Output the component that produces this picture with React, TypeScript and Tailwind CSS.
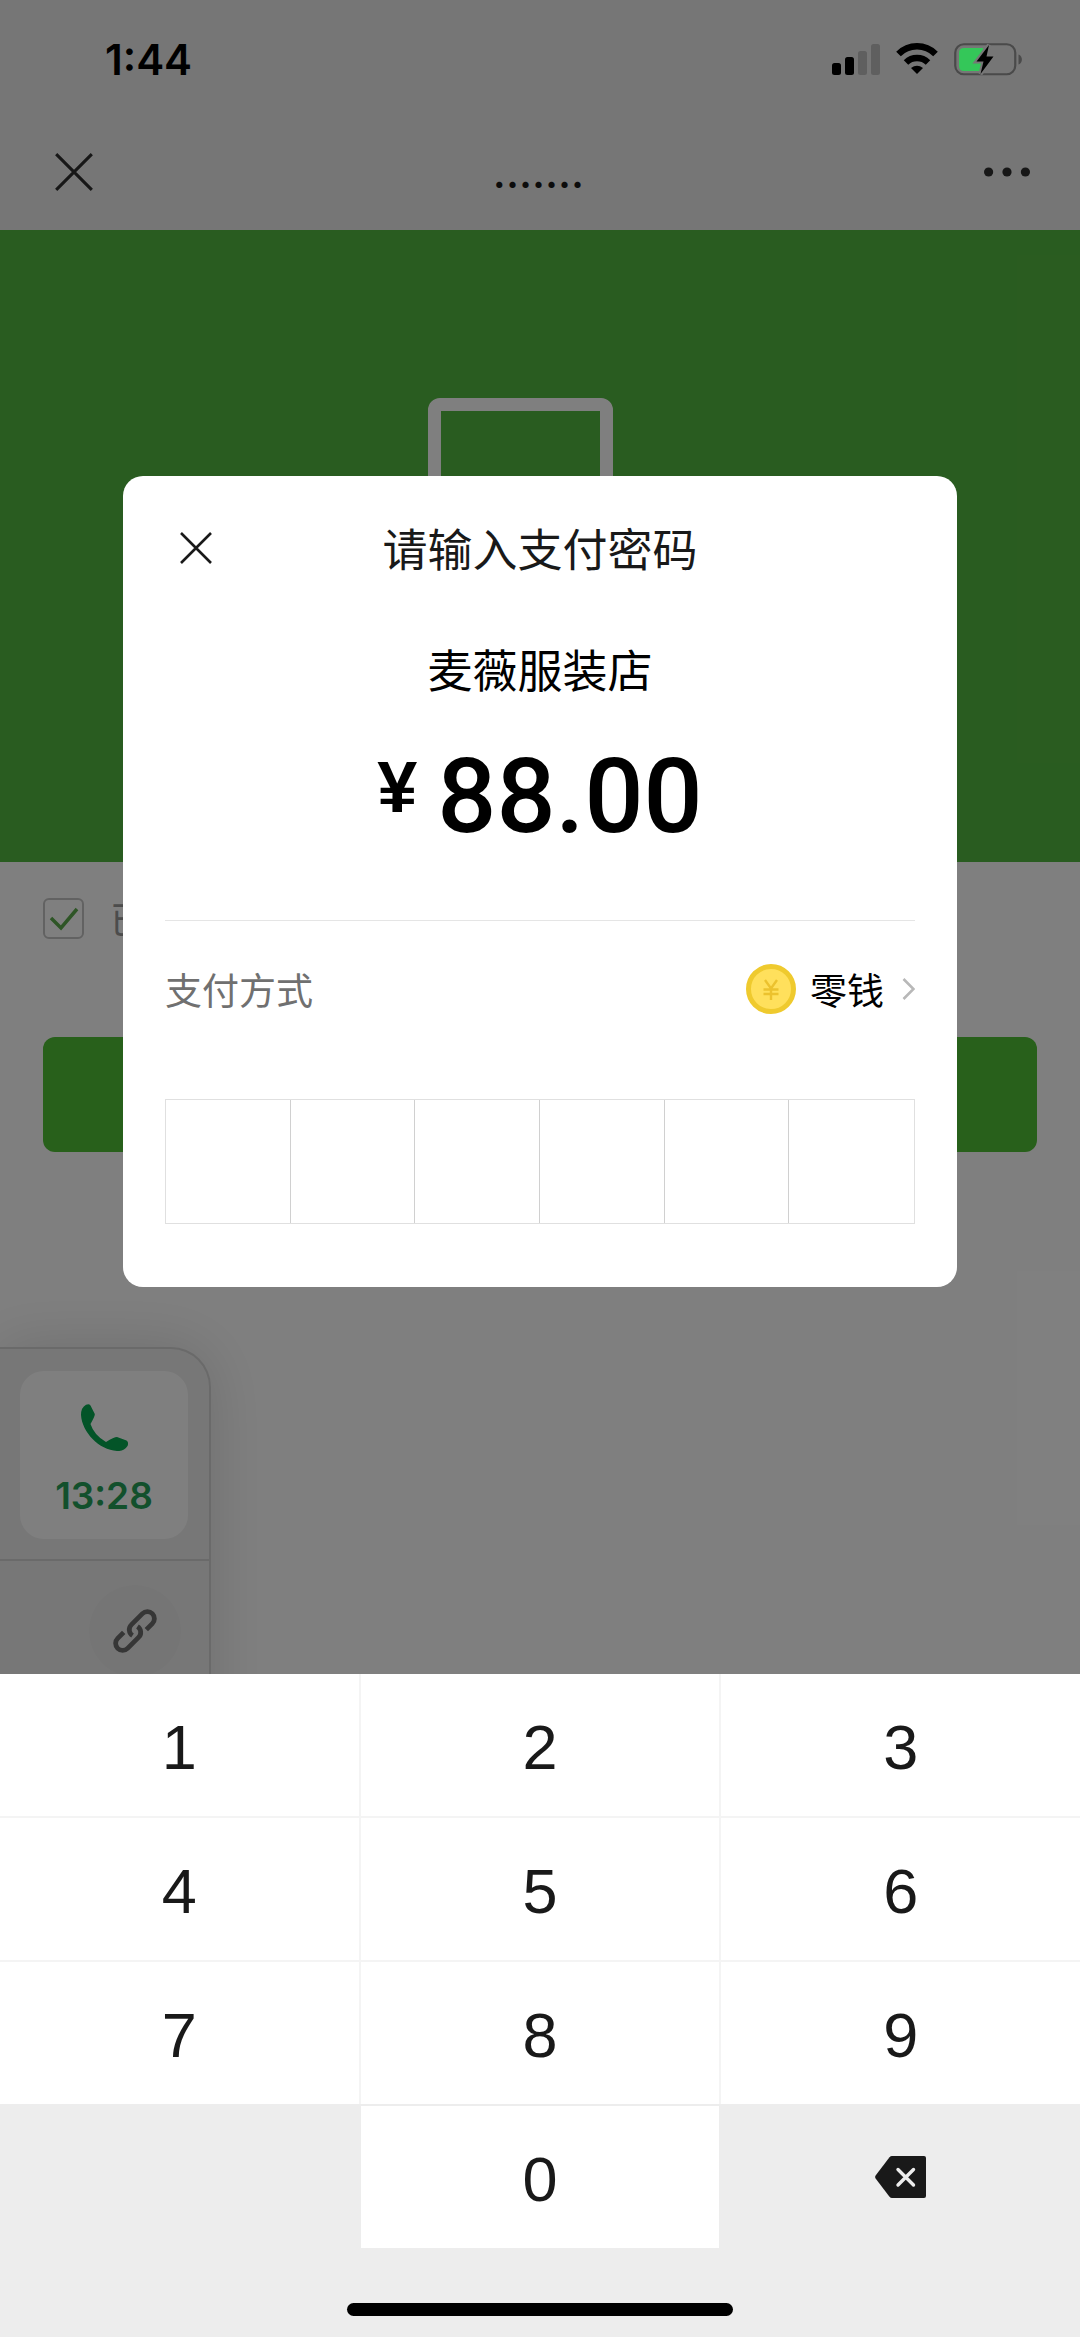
import { useState } from 'react';

const digitKeys = ['1', '2', '3', '4', '5', '6', '7', '8', '9'];
const PIN_LENGTH = 6;

function SignalIcon() {
  return (
    <svg width="48" height="31" viewBox="0 0 48 31" aria-hidden="true">
      <rect x="0" y="19" width="9" height="12" rx="2.5" fill="#000" />
      <rect x="13" y="13" width="9" height="18" rx="2.5" fill="#000" />
      <rect x="26" y="7" width="9" height="24" rx="2.5" fill="#5f5f5f" />
      <rect x="39" y="0" width="9" height="31" rx="2.5" fill="#5f5f5f" />
    </svg>
  );
}

function WifiIcon() {
  return (
    <svg width="42" height="32" viewBox="0 0 42 32" fill="none" stroke="#000" strokeWidth="6.5" aria-hidden="true">
      <path d="M2.5 11A26 26 0 0 1 39.5 11" />
      <path d="M10 19.5A16 16 0 0 1 32 19.5" />
      <path d="M15 25Q21 20.500 27 25L21 31Z" fill="#000" stroke="none" />
    </svg>
  );
}

function BatteryIcon() {
  return (
    <svg width="69" height="33" viewBox="0 0 69 33" aria-hidden="true">
      <rect x="1.25" y="1.25" width="60" height="30" rx="8.500" fill="none" stroke="#4a4a4a" strokeWidth="2.200" />
      <path d="M64.500 11.500c4.500 1.500 4.500 8.500 0 10z" fill="#4a4a4a" />
      <path d="M10 5H29V28H10Q5 28 5 23V10Q5 5 10 5Z" fill="#34c759" />
      <path d="M35 2L22.500 18.500H29.500L26.500 31L39.500 13.500H32.500Z" fill="#000" stroke="#777" strokeWidth="4" paintOrder="stroke" />
    </svg>
  );
}

function CloseIcon({ size, color }: { size: number; color: string }) {
  return (
    <svg width={size} height={size} viewBox="0 0 32 32" fill="none" stroke={color} strokeWidth="2.600" aria-hidden="true">
      <path d="M1 1L31 31M31 1L1 31" />
    </svg>
  );
}

function PhoneIcon() {
  return (
    <svg width="47" height="47" viewBox="0 0 47 47" fill="#07a850" aria-hidden="true">
      <path d="M5 .8Q8-.8 9.500 1.500L13.800 10Q14.200 12 9.500 20Q13 31 25 38Q33 33 36 33L45.500 36.500Q48 38 46.500 42Q43 47.500 36 47C18 46 1 28 0 11Q0 3.500 5 .8Z" />
    </svg>
  );
}

function LinkIcon() {
  return (
    <svg width="46" height="46" viewBox="-23 -23 46 46" fill="none" stroke="#6c6c6c" strokeWidth="4.800" aria-hidden="true">
      <g transform="rotate(-45)">
        <path d="M-5 1.500A7 7 0 0 1 2-7H17.500A7 7 0 0 1 17.500 7H9" />
        <path d="M5-1.500A7 7 0 0 1-2 7H-17.500A7 7 0 0 1-17.500-7H-9" />
      </g>
    </svg>
  );
}

function CoinIcon() {
  return (
    <svg width="50" height="50" viewBox="0 0 50 50" fill="none" aria-hidden="true">
      <circle cx="25" cy="25" r="22.500" fill="#ffe05c" stroke="#efca2e" strokeWidth="5" />
      <path d="M19 16L25 24.500L31 16M17.500 25.500H32.500M17.500 30H32.500M25 24.500V36" stroke="#ecc22e" strokeWidth="2.400" />
    </svg>
  );
}

function BackspaceIcon() {
  return (
    <svg width="51" height="42" viewBox="0 0 51 42" aria-hidden="true">
      <path d="M17 0H49Q51 0 51 2V40Q51 42 49 42H17Q15.500 42 14.500 40.800L.6 22.500Q-.4 21 .6 19.500L14.500 1.200Q15.500 0 17 0Z" fill="#191919" />
      <path d="M23 13.500L38.500 29M38.500 13.500L23 29" stroke="#ededed" strokeWidth="3.400" strokeLinecap="round" />
    </svg>
  );
}

function PageHeader() {
  return (
    <header className="bg-[#ededed]">
      <div className="relative z-20 flex h-[114px] items-center justify-between pt-1 pr-[57px] pl-[105px]">
        <span className="font-['Inter'] text-[42px] font-semibold text-black">1:44</span>
        <div className="flex items-center gap-4">
          <SignalIcon />
          <WifiIcon />
          <BatteryIcon />
        </div>
      </div>
      <div className="flex h-[116px] items-center justify-between pr-[50px] pl-[55px]">
        <button type="button" aria-label="关闭页面">
          <CloseIcon size={38} color="#2e2e2e" />
        </button>
        <h1 className="font-['Inter'] text-[43px] font-medium text-[#191919]">.......</h1>
        <button type="button" aria-label="更多">
          <svg width="46" height="10" viewBox="0 0 46 10" fill="#2e2e2e" aria-hidden="true">
            <circle cx="4.600" cy="5" r="4.600" />
            <circle cx="23" cy="5" r="4.600" />
            <circle cx="41.400" cy="5" r="4.600" />
          </svg>
        </button>
      </div>
    </header>
  );
}

function OrderPage() {
  const [agreed, setAgreed] = useState(true);

  return (
    <div>
      <div className="flex h-[632px] justify-center bg-[#53b840] pt-[168px] pr-[39px]">
        <div className="h-[300px] w-[185px] rounded-xl border-[13px] border-white" />
      </div>
      <div className="px-[43px] pt-9">
        <label className="flex items-center gap-[26px] text-[37px] leading-[41px] text-[#999]">
          <span className="relative block size-[41px]">
            <input
              type="checkbox"
              checked={agreed}
              onChange={(e) => setAgreed(e.target.checked)}
              className="block size-full appearance-none rounded-md border-2 border-[#c4c4c4]"
            />
            {agreed && (
              <svg className="pointer-events-none absolute inset-0" viewBox="0 0 41 41" fill="none" stroke="#5cab4c" strokeWidth="3.500" aria-hidden="true">
                <path d="M8 20L18 30L34 11" />
              </svg>
            )}
          </span>
          已
        </label>
        <button type="button" aria-label="提交" className="mt-[98px] block h-[115px] w-full rounded-xl bg-[#50c036]" />
      </div>
    </div>
  );
}

function FloatingCall() {
  return (
    <aside className="absolute top-[1347px] left-0 w-[211px] overflow-hidden rounded-tr-[40px] border-2 border-l-0 border-[#d4d4d4] bg-[#efefef] shadow-[0_0_60px_rgba(0,0,0,0.14)]">
      <div className="border-b-2 border-[#d4d4d4] pt-[22px] pb-5 pl-5">
        <div className="flex size-[168px] flex-col items-center rounded-3xl bg-white pt-[33px]">
          <PhoneIcon />
          <span className="mt-5 font-['Inter'] text-[37px] leading-[50px] font-semibold text-[#25a058]">13:28</span>
        </div>
      </div>
      <div className="flex h-[200px] justify-end pt-6 pr-7">
        <div className="flex size-[92px] items-center justify-center rounded-full bg-[#ebebeb]">
          <LinkIcon />
        </div>
      </div>
    </aside>
  );
}

function PasswordDialog({ pin }: { pin: string }) {
  return (
    <section role="dialog" aria-labelledby="dialog-title" className="mx-[123px] grow rounded-[20px] bg-white px-[42px] pt-[42px] pb-[63px]">
      <div className="grid grid-cols-[61px_1fr_61px] items-center">
        <button type="button" aria-label="关闭" className="flex justify-center">
          <CloseIcon size={32} color="#191919" />
        </button>
        <h2 id="dialog-title" className="text-center text-[45px] leading-[60px] text-[#191919]">请输入支付密码</h2>
      </div>
      <p className="mt-[61px] text-center text-[45px] leading-[60px] text-black">麦薇服装店</p>
      <p className="mt-[46px] flex justify-center gap-5 font-['Roboto'] font-medium text-black">
        <span className="font-['Liberation_Sans'] text-[72px] leading-[84px] font-bold">¥</span>
        <span className="text-[104px] leading-[104px]">88.00</span>
      </p>
      <div className="mt-[71px] flex h-[137px] items-center justify-between border-t border-[#e5e5e5] text-[37px] leading-[50px]">
        <span className="text-[#707070]">支付方式</span>
        <button type="button" className="flex items-center text-black">
          <CoinIcon />
          <span className="ml-3.5">零钱</span>
          <svg className="ml-[18px]" width="13" height="22" viewBox="0 0 13 22" fill="none" stroke="#b8b8b8" strokeWidth="2.600" aria-hidden="true">
            <path d="M1.500 1L11.500 11L1.500 21" />
          </svg>
        </button>
      </div>
      <div className="mt-[42px] grid h-[125px] grid-cols-6 divide-x divide-[#d0d0d0] border border-[#e0e0e0]">
        {Array.from({ length: PIN_LENGTH }, (_, i) => (
          <input
            key={i}
            type="password"
            readOnly
            value={pin[i] ?? ''}
            aria-label={`密码第${i + 1}位`}
            className="w-full min-w-0 text-center text-[45px] outline-none"
          />
        ))}
      </div>
    </section>
  );
}

function Keypad({ onDigit, onDelete }: { onDigit: (digit: string) => void; onDelete: () => void }) {
  const keyClass = "h-[142px] bg-white pt-1 font-['Liberation_Sans'] text-[63px] text-[#191919]";

  return (
    <div className="bg-[#ededed]">
      <div className="grid grid-cols-3 gap-0.5 bg-[#f4f4f4]">
        {digitKeys.map((digit) => (
          <button key={digit} type="button" className={keyClass} onClick={() => onDigit(digit)}>
            {digit}
          </button>
        ))}
      </div>
      <div className="grid grid-cols-3 gap-0.5 pt-0.5">
        <button type="button" className={`${keyClass} col-start-2`} onClick={() => onDigit('0')}>
          0
        </button>
        <button type="button" aria-label="删除" className="flex items-center justify-center" onClick={onDelete}>
          <BackspaceIcon />
        </button>
      </div>
      <div className="flex h-[89px] justify-center pt-[55px]">
        <div className="h-[13px] w-[386px] rounded-full bg-black" />
      </div>
    </div>
  );
}

export default function App() {
  const [pin, setPin] = useState('');

  const addDigit = (digit: string) => setPin((prev) => (prev + digit).slice(0, PIN_LENGTH));
  const removeDigit = () => setPin((prev) => prev.slice(0, -1));

  return (
    <div className="relative min-h-screen overflow-hidden bg-white font-['Noto_Sans_CJK_SC',sans-serif]">
      <PageHeader />
      <OrderPage />
      <FloatingCall />

      <div className="absolute inset-0 z-10 flex flex-col bg-black/50">
        <div className="flex grow items-center pt-[88px]">
          <PasswordDialog pin={pin} />
        </div>
        <Keypad onDigit={addDigit} onDelete={removeDigit} />
      </div>
    </div>
  );
}
